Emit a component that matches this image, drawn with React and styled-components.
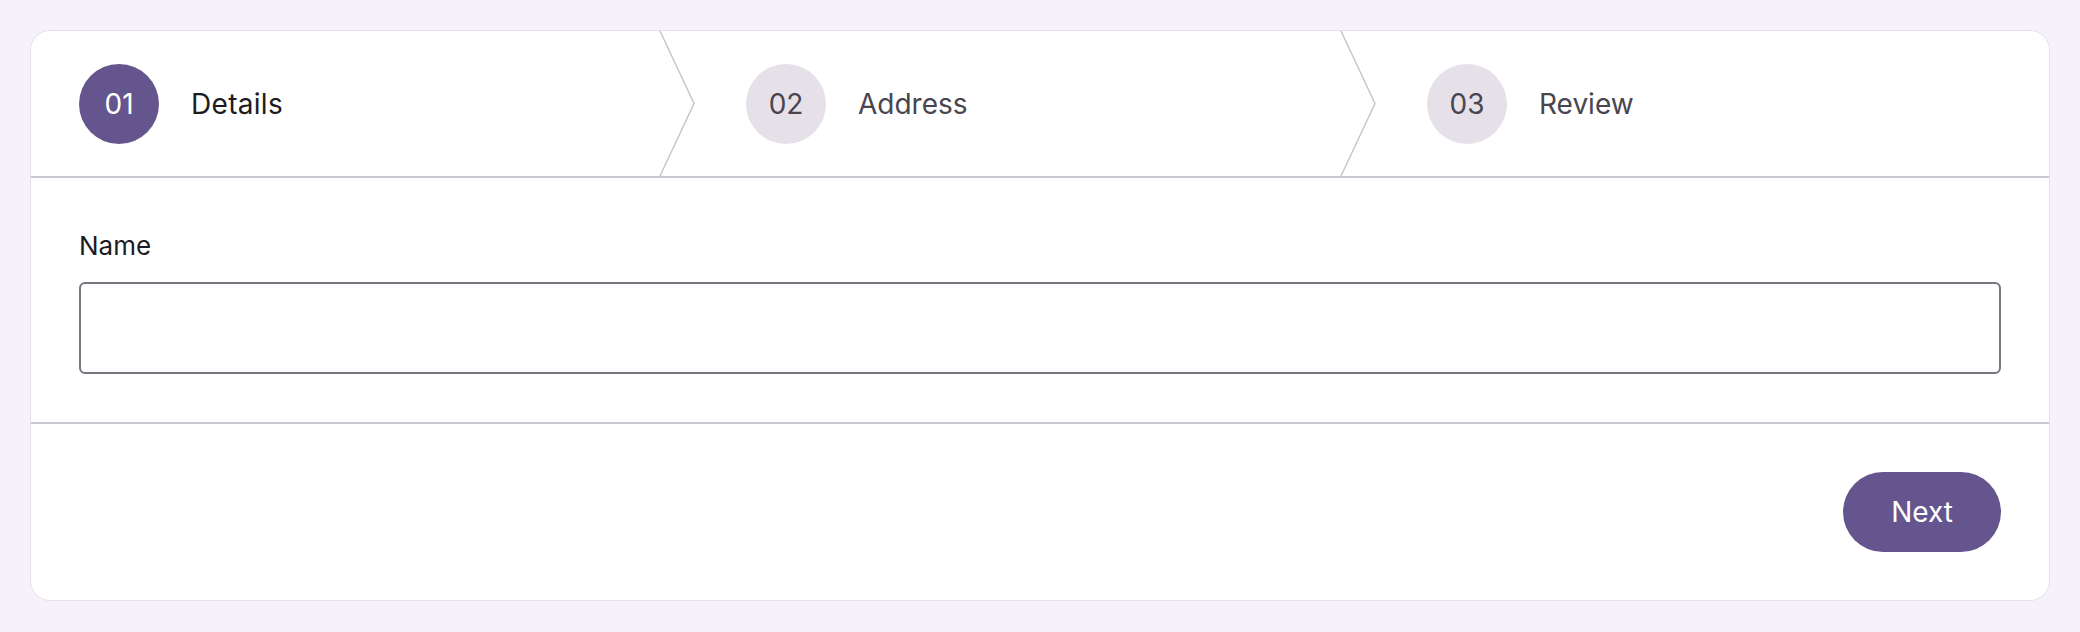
import React from 'react';
import styled, { createGlobalStyle } from 'styled-components';

const GlobalStyle = createGlobalStyle`
  html, body {
    margin: 0;
    padding: 0;
    background: #f7f2fa;
  }
  body {
    font-family: Inter, "Liberation Sans", sans-serif;
    color: #1d1b20;
  }
`;

const Page = styled.div`
  padding: 30px;
`;

const Card = styled.div`
  background: #ffffff;
  border: 1px solid #e6e0e9;
  border-radius: 20px;
  overflow: hidden;
`;

const Steps = styled.ol`
  display: grid;
  grid-template-columns: 629px 681px 1fr;
  margin: 0;
  padding: 0;
  list-style: none;
  border-bottom: 2px solid #cac4d0;
`;

const Step = styled.li`
  position: relative;
  display: flex;
  align-items: center;
  gap: 32px;
  padding: 33px 0 32px ${p => (p.first ? '48px' : '86px')};
`;

const Chevron = styled.svg`
  position: absolute;
  top: 0;
  left: 100%;
  width: 36px;
  height: 100%;
  overflow: visible;
  z-index: 1;
`;

const Bubble = styled.span`
  flex: none;
  width: 80px;
  height: 80px;
  border-radius: 50%;
  display: flex;
  align-items: center;
  justify-content: center;
  font-size: 28px;
  background: ${p => (p.active ? '#65558f' : '#e6e0e9')};
  color: ${p => (p.active ? '#ffffff' : '#49454f')};
`;

const StepLabel = styled.span`
  font-size: 28px;
  letter-spacing: ${p => (p.active ? '0.3px' : '0')};
  color: ${p => (p.active ? '#1d1b20' : '#49454f')};
`;

const Form = styled.div`
  display: flex;
  flex-direction: column;
  gap: 16px;
  padding: 48px;
  border-bottom: 2px solid #cac4d0;
`;

const Label = styled.label`
  font-size: 26px;
  line-height: 40px;
  color: #1d1b20;
`;

const Input = styled.input`
  box-sizing: border-box;
  height: 92px;
  width: 100%;
  border: 2px solid #79747e;
  border-radius: 6px;
  padding: 0 20px;
  font-family: inherit;
  font-size: 26px;
  background: #ffffff;
  outline: none;
`;

const Footer = styled.div`
  display: flex;
  justify-content: flex-end;
  padding: 48px;
`;

const NextButton = styled.button`
  height: 80px;
  padding: 0 48px;
  border: none;
  border-radius: 40px;
  background: #65558f;
  color: #ffffff;
  font-family: inherit;
  font-size: 28px;
  cursor: pointer;
`;

const steps = [
  { num: '01', label: 'Details' },
  { num: '02', label: 'Address' },
  { num: '03', label: 'Review' },
];

export default function App() {
  const current = 0;
  return (
    <Page>
      <GlobalStyle />
      <Card>
        <Steps>
          {steps.map((s, i) => (
            <Step key={s.num} first={i === 0}>
              <Bubble active={i === current}>{s.num}</Bubble>
              <StepLabel active={i === current}>{s.label}</StepLabel>
              {i < steps.length - 1 && (
                <Chevron viewBox="0 0 36 147" preserveAspectRatio="none">
                  <polyline
                    points="0,0 34,73.5 0,147"
                    fill="none"
                    stroke="#cac4d0"
                    strokeWidth="1.5"
                  />
                </Chevron>
              )}
            </Step>
          ))}
        </Steps>
        <Form>
          <Label htmlFor="name">Name</Label>
          <Input id="name" type="text" />
        </Form>
        <Footer>
          <NextButton>Next</NextButton>
        </Footer>
      </Card>
    </Page>
  );
}
